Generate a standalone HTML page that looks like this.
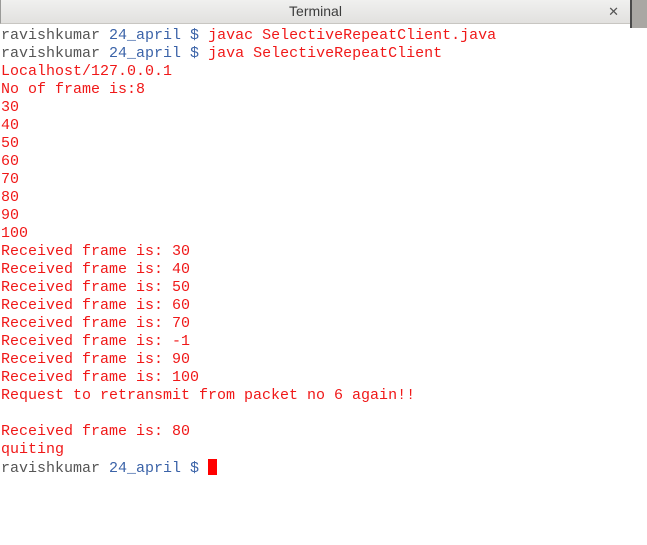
<!DOCTYPE html>
<html><head><style>
html,body{margin:0;padding:0;width:647px;height:545px;overflow:hidden;background:#fff}
.tb{position:absolute;left:0;top:0;width:630px;height:24px;background:linear-gradient(#f0f0ef,#e2e1df);border-bottom:1px solid #c8c6c2;border-left:1px solid #9a9a98;box-sizing:border-box;font-family:"Liberation Sans",sans-serif;font-size:14px;color:#3c3c3c;text-align:center;line-height:23px}
.x{position:absolute;right:11px;top:0;font-size:13px;color:#555}
.side{position:absolute;left:630px;top:0;width:17px;height:28px;background:#a9a7a3;border-left:2px solid #4a4a4a}
pre{position:absolute;left:1px;top:27px;margin:0;font-family:"Liberation Mono",monospace;font-size:15px;line-height:18px;color:#f01818}
.u{color:#555}.b{color:#3b63a8}
.c{display:inline-block;width:9px;height:16px;background:#f00;vertical-align:-3px}
</style></head><body>
<div class="tb">Terminal<span class="x">✕</span></div>
<div class="side"></div>
<pre><span class="u">ravishkumar</span> <span class="b">24_april $</span> javac SelectiveRepeatClient.java
<span class="u">ravishkumar</span> <span class="b">24_april $</span> java SelectiveRepeatClient
Localhost/127.0.0.1
No of frame is:8
30
40
50
60
70
80
90
100
Received frame is: 30
Received frame is: 40
Received frame is: 50
Received frame is: 60
Received frame is: 70
Received frame is: -1
Received frame is: 90
Received frame is: 100
Request to retransmit from packet no 6 again!!

Received frame is: 80
quiting
<span class="u">ravishkumar</span> <span class="b">24_april $</span> <span class="c"></span></pre>
</body></html>
